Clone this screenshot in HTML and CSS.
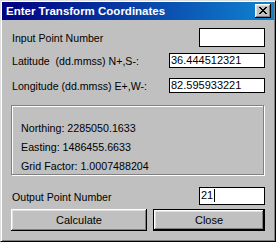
FILE: index.html
```html
<!DOCTYPE html>
<html>
<head>
<meta charset="utf-8">
<link rel="stylesheet" href="styles.css">
</head>
<body>
<div class="window">
  <div class="titlebar">
    <span class="title">Enter Transform Coordinates</span>
    <span class="close"><svg width="8" height="7" viewBox="0 0 8 7"><path d="M0 0h2v1h-2zM6 0h2v1h-2zM1 1h2v1h-2zM5 1h2v1h-2zM2 2h4v1h-4zM3 3h2v1h-2zM2 4h4v1h-4zM1 5h2v1h-2zM5 5h2v1h-2zM0 6h2v1h-2zM6 6h2v1h-2z" fill="#000"/></svg></span>
  </div>
  <div class="content">
    <div class="row row-input">
      <span class="label l4">Input Point Number</span>
      <span class="field f-short h19"></span>
    </div>
    <div class="row row-lat">
      <span class="label l2">Latitude&nbsp; (dd.mmss) N+,S-:</span>
      <span class="field f-long h15">36.444512321</span>
    </div>
    <div class="row row-lon">
      <span class="label l2">Longitude (dd.mmss) E+,W-:</span>
      <span class="field f-long h15">82.595933221</span>
    </div>
    <div class="group">
      <div class="gline">Northing: 2285050.1633</div>
      <div class="gline">Easting: 1486455.6633</div>
      <div class="gline">Grid Factor: 1.0007488204</div>
    </div>
    <div class="row row-out">
      <span class="label l4">Output Point Number</span>
      <span class="field f-short h18">21<span class="caret"></span></span>
    </div>
    <div class="buttons">
      <span class="btn btn-calc">Calculate</span>
      <span class="btn btn-close">Close</span>
    </div>
  </div>
</div>
</body>
</html>
```
FILE: styles.css
```css
html, body {
  margin: 0;
  padding: 0;
  background: #c0c0c0;
}
.window {
  width: 276px;
  height: 242px;
  box-sizing: border-box;
  background: #c0c0c0;
  border: 1px solid;
  border-color: #dfdfdf #000 #000 #dfdfdf;
  box-shadow: inset 1px 1px #fff, inset -1px -1px #808080;
  padding: 1px;
  display: flex;
  flex-direction: column;
  font-family: "Liberation Sans", Arial, sans-serif;
  font-size: 11px;
  line-height: 13px;
  color: #000;
}
.titlebar {
  height: 18px;
  flex: none;
  background: linear-gradient(90deg, #000080, #1084d0);
  display: flex;
  align-items: center;
  justify-content: space-between;
  padding: 0 3px 0 4px;
}
.title {
  color: #fff;
  font-weight: bold;
  font-size: 11.5px;
  line-height: 18px;
}
.close {
  width: 16px;
  height: 14px;
  box-sizing: border-box;
  background: #c0c0c0;
  box-shadow: inset -1px -1px #000, inset 1px 1px #fff, inset -2px -2px #808080, inset 2px 2px #dfdfdf;
  display: flex;
  align-items: center;
  justify-content: center;
  padding: 0 1px 1px 0;
}
.close svg { display: block; }
.content {
  display: flex;
  flex-direction: column;
  padding: 8px 9px 0 9px;
}
.row {
  display: flex;
  justify-content: space-between;
  align-items: flex-start;
}
.row-lat { margin-top: 6px; }
.row-lon { margin-top: 10px; }
.row-out { margin-top: 12px; }
.label {
  padding-left: 1px;
  white-space: pre;
  font-size: 10.6px;
}
.l4 { margin-top: 4px; }
.l2 { margin-top: 2px; }
.field {
  box-sizing: border-box;
  background: #fff;
  border: 1px solid #000;
  padding: 1px 0 0 1px;
  display: flex;
  align-items: flex-start;
  white-space: nowrap;
}
.f-short { width: 66px; }
.f-long { width: 96px; }
.h19 { height: 19px; }
.h18 { height: 18px; }
.h15 { height: 15px; padding-top: 0; }
.caret {
  display: inline-block;
  width: 1px;
  height: 13px;
  background: #000;
  margin-left: 1px;
}
.group {
  margin-top: 12px;
  height: 70px;
  width: 253px;
  box-sizing: border-box;
  border: 1px solid #808080;
  box-shadow: 1px 1px 0 #fff, inset 1px 1px 0 #fff;
  padding: 13px 0 0 9px;
  font-size: 10.7px;
}
.gline { line-height: 19px; }
.buttons {
  display: flex;
  justify-content: space-between;
  margin-top: 4px;
}
.btn {
  height: 22px;
  box-sizing: border-box;
  display: flex;
  align-items: center;
  justify-content: center;
  background: #c0c0c0;
  box-shadow: inset -1px -1px #000, inset 1px 1px #fff, inset -2px -2px #808080, inset 2px 2px #dfdfdf;
}
.btn-calc { width: 136px; }
.btn-close {
  width: 112px;
  border: 1px solid #000;
}
```
